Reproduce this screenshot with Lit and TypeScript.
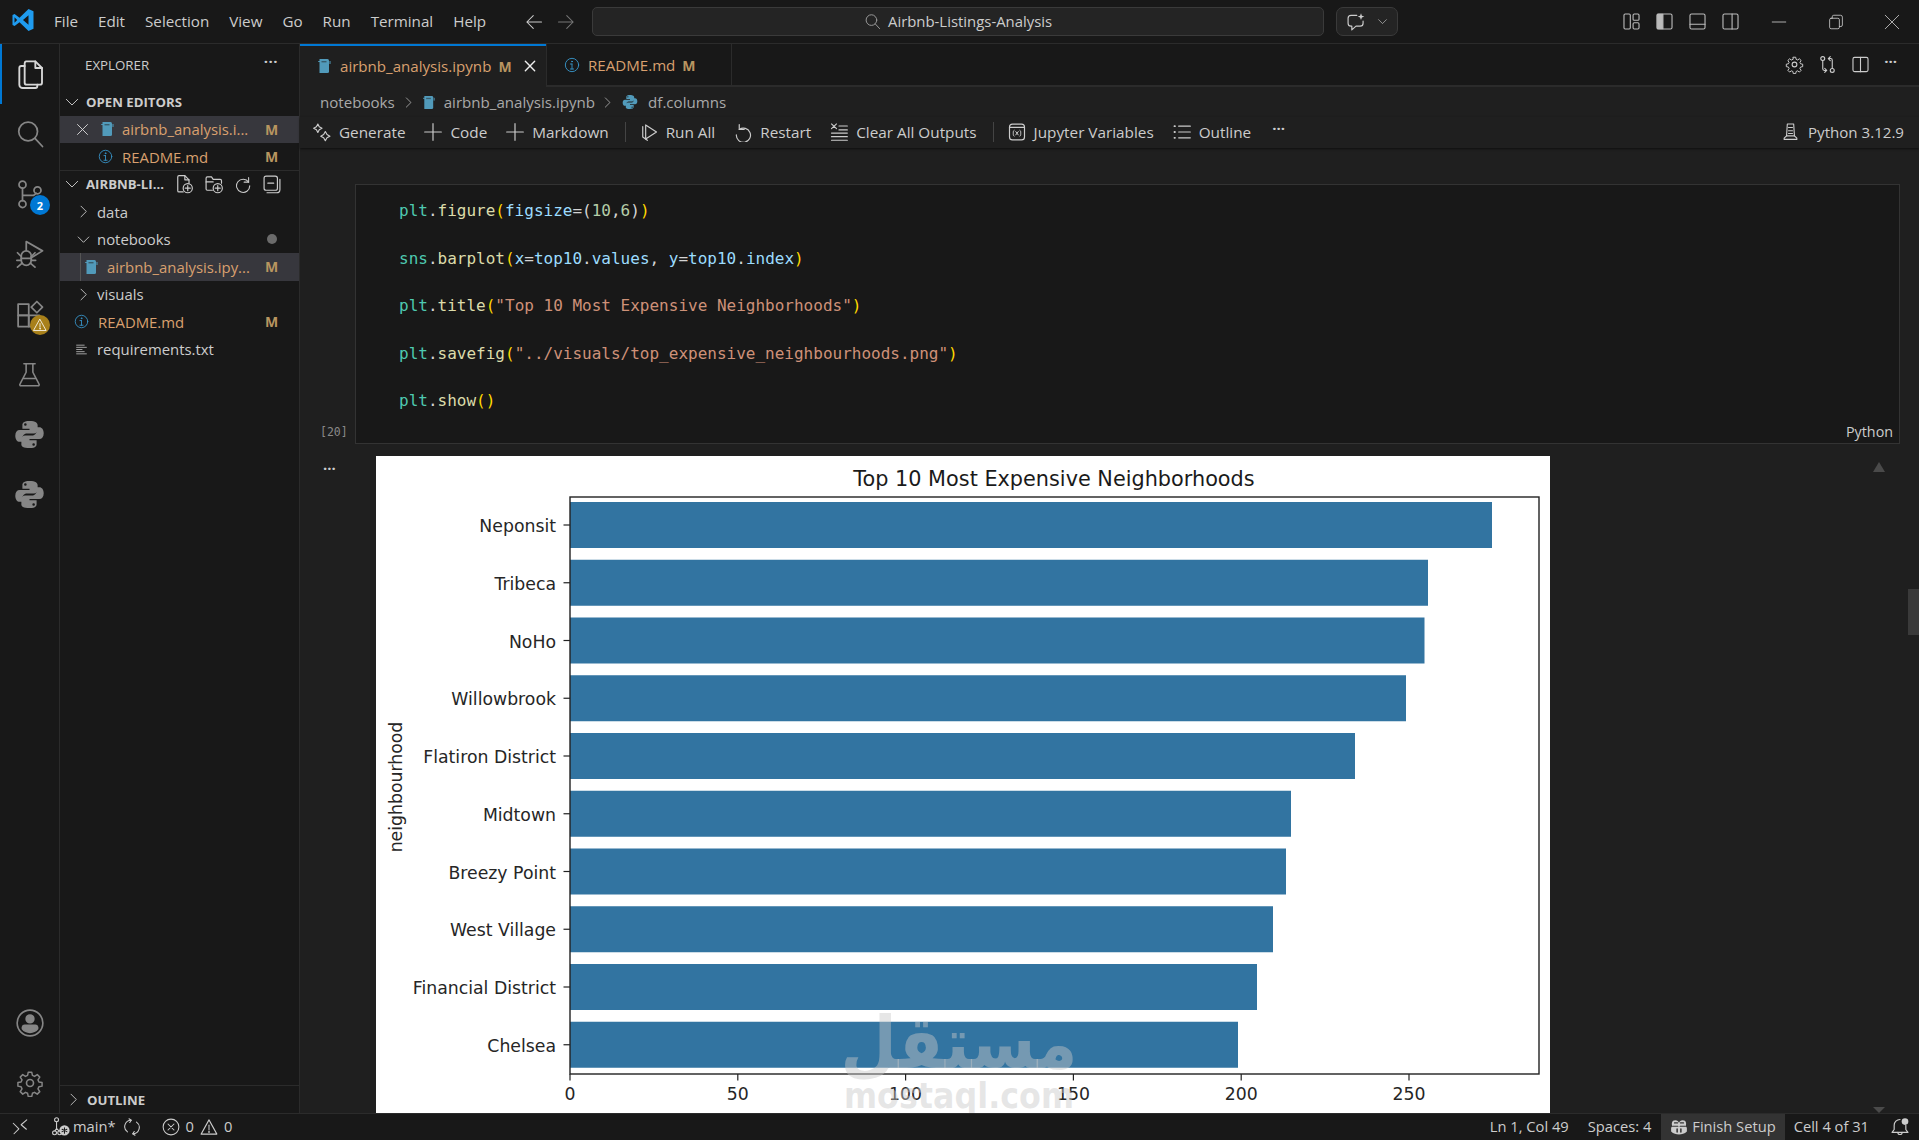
import { LitElement, html, css, svg } from "lit";
import { customElement } from "lit/decorators.js";

const ic = (size: number, body: unknown, vb = "0 0 24 24") => html`<svg class="ic" width=${size} height=${size} viewBox=${vb} fill="none" stroke="currentColor" stroke-width="1.4" stroke-linecap="round" stroke-linejoin="round">${body}</svg>`;

const I = {
  files: svg`<path d="M9 2.500h7l5 5v11a1.500 1.500 0 0 1-1.500 1.500h-10A1.500 1.500 0 0 1 8 18.500v-14.500a1.500 1.500 0 0 1 1-1.500z"/><path d="M16 2.500v5h5"/><path d="M8 6H5.500A1.500 1.500 0 0 0 4 7.500V20a2.500 2.500 0 0 0 2.500 2.500H16a1.500 1.500 0 0 0 1.500-1.500v-1"/>`,
  search: svg`<circle cx="10.500" cy="10" r="7.500"/><path d="M16 15.500l6 6.500"/>`,
  scm: svg`<circle cx="6" cy="4.500" r="2.800"/><circle cx="6" cy="20" r="2.800"/><circle cx="18" cy="9" r="2.800"/><path d="M6 7.300v9.900M6 13h9l2-1.500"/>`,
  debug: svg`<path d="M9 9V2l13 7.500-9 5.500"/><path d="M5 13.500a4 4 0 0 1 8 0V17a4 4 0 0 1-8 0z"/><path d="M2 11l3 3M16 11l-3 3M1.500 17H5M16.500 17H13M2 22.500l3.500-3M16 22.500l-3.500-3M5 15.500h8"/>`,
  ext: svg`<rect x="2.500" y="4" width="8.500" height="9"/><rect x="2.500" y="13" width="8.500" height="9"/><rect x="11" y="13" width="8.500" height="9"/><path d="M13 6.500l4.500-4.500 4.500 4.500-4.500 4.500z"/>`,
  beaker: svg`<path d="M7 2.500h10M9 2.500v7.500L3.500 20.500a1 1 0 0 0 1 1.500h15a1 1 0 0 0 1-1.500L15 10V2.500M7 15.500h10"/>`,
  account: svg`<circle cx="12" cy="12" r="11"/><circle cx="12" cy="8.500" r="3.300" fill="currentColor"/><path d="M5.500 15.500a2 2 0 0 1 2-1.500h9a2 2 0 0 1 2 1.500v1.500c-1.500 2-4 3-6.500 3s-5-1-6.500-3z" fill="currentColor"/>`,
  gear: svg`<circle cx="12" cy="12" r="3"/><path d="M10.300 1.800h3.400l.6 3 2 .9 2.600-1.700 2.400 2.400-1.700 2.600.9 2 3 .6v3.400l-3 .6-.9 2 1.700 2.600-2.400 2.400-2.600-1.700-2 .9-.6 3h-3.400l-.6-3-2-.9-2.600 1.700-2.400-2.400 1.700-2.600-.9-2-3-.6v-3.400l3-.6.9-2-1.700-2.600 2.400-2.400 2.600 1.700 2-.9z" transform="translate(1.200 1.200) scale(.9)"/>`,
  chevR: svg`<path d="M8 3.500l8.500 8.500L8 20.500"/>`,
  chevD: svg`<path d="M3.500 8l8.500 8.500L20.500 8"/>`,
  x: svg`<path d="M4 4l16 16M20 4L4 20"/>`,
  plus: svg`<path d="M12 2v20M2 12h20"/>`,
  info: svg`<circle cx="12" cy="12" r="10"/><path d="M12 10.500V18M9.500 18h5M9.500 10.500H12" /><circle cx="12" cy="6.800" r=".7" fill="currentColor"/>`,
  lines: svg`<path d="M3 5h14M3 9h18M3 13h10M3 17h14M3 21h18" transform="translate(0 -1)"/>`,
  sparkle: svg`<path d="M7 2.500l1.700 3.300L12 7.500 8.700 9.200 7 12.500 5.300 9.200 2 7.500l3.300-1.700zM16 11.500l2 3.500 3.500 2-3.500 2-2 3.500-2-3.500-3.500-2 3.500-2z"/>`,
  run: svg`<path d="M8 3.500L21 12 8 20.500z"/><path d="M4.500 5.500v12.500l5.500 4" />`,
  restart: svg`<path d="M7.500 3v6h6"/><path d="M7.500 9A8.500 8.500 0 1 1 4 15.500"/>`,
  clear: svg`<path d="M3 2.500l6 6M9 2.500l-6 6M12 5h10M12 10h10M3 14h19M3 18.500h19M3 23h19" transform="scale(1 .95)"/>`,
  vars: svg`<rect x="3" y="2.500" width="18" height="19" rx="3.500"/><path d="M3 6.500h18"/><path d="M8.500 10c-1 .5-1 1.500-1 3.500s0 3 1 3.500M15.500 10c1 .5 1 1.500 1 3.500s0 3-1 3.500M10.500 11.500l3 4M13.500 11.500l-3 4" stroke-width="1.200"/>`,
  outline: svg`<path d="M3 5h.5M3 12h.5M3 19h.5" stroke-width="2.200"/><path d="M8 5h14M8 12h14M8 19h14"/>`,
  kernel: svg`<path d="M8 2.500h8l1 15H7zM9.500 7h5M9.500 11h5M9.500 14.500h5"/><path d="M7 17.500l-3 3v1.500h16v-1.500l-3-3"/>`,
  compare: svg`<circle cx="6" cy="4.500" r="2.500"/><circle cx="18" cy="19.500" r="2.500"/><path d="M6 7v10.500a2 2 0 0 0 2 2h3l-2.500-2.500M11 19.500L8.500 22"/><path d="M18 17V6.500a2 2 0 0 0-2-2h-3l2.500 2.500M13 4.500L15.500 2"/>`,
  split: svg`<rect x="2.500" y="3" width="19" height="18" rx="2"/><path d="M12 3v18"/>`,
  layout: svg`<rect x="2.500" y="2.500" width="8" height="19" rx="1.500"/><rect x="14" y="2.500" width="7.500" height="8" rx="1.500"/><rect x="14" y="13.500" width="7.500" height="8" rx="1.500"/>`,
  side: svg`<rect x="2.500" y="2.500" width="19" height="19" rx="2"/><path d="M3 3h7v18H3z" fill="currentColor"/>`,
  panel: svg`<rect x="2.500" y="2.500" width="19" height="19" rx="2"/><path d="M2.500 15.500h19"/>`,
  right: svg`<rect x="2.500" y="2.500" width="19" height="19" rx="2"/><path d="M14 2.500v19"/>`,
  chat: svg`<path d="M13 4H6a3.500 3.500 0 0 0-3.500 3.500v6A3.500 3.500 0 0 0 6 17h1v4.500l5-4.500h5a3.500 3.500 0 0 0 3.500-3.500V11"/><path d="M18 1.500l1.100 2.900L22 5.500l-2.900 1.100L18 9.500l-1.100-2.900L14 5.500l2.900-1.100z" fill="currentColor" stroke="none"/>`,
  newfile: svg`<path d="M11 21.500H6a1.500 1.500 0 0 1-1.500-1.500V3.500A1.500 1.500 0 0 1 6 2h7l5 5v4"/><path d="M13 2v5h5"/><circle cx="16.500" cy="17" r="5.500"/><path d="M16.500 14v6M13.500 17h6"/>`,
  newfolder: svg`<path d="M10 19.500H4a1.500 1.500 0 0 1-1.500-1.500V5A1.500 1.500 0 0 1 4 3.500h5l2 3h8.500A1.500 1.500 0 0 1 21 8v3"/><path d="M2.500 9.500H11"/><circle cx="16.500" cy="17" r="5.500"/><path d="M16.500 14v6M13.500 17h6"/>`,
  refresh: svg`<path d="M19.500 3.500v6h-6"/><path d="M19.500 9.500A8.800 8.800 0 1 0 21 14.500"/>`,
  collapse: svg`<rect x="2.500" y="2.500" width="16" height="17" rx="2.500"/><path d="M7 11h7"/><path d="M6 22.500h11.500a4 4 0 0 0 4-4V6.500"/>`,
  sync: svg`<path d="M6 18.500a8.500 8.500 0 0 1 5-15.500M18 5.500a8.500 8.500 0 0 1-5 15.500"/><path d="M8 1l3 2-2 3M16 23l-3-2 2-3"/>`,
  err: svg`<circle cx="12" cy="12" r="10.500"/><path d="M8 8l8 8M16 8l-8 8"/>`,
  warn: svg`<path d="M12 2.500L22.500 21.500h-21z"/><path d="M12 9.500v6.500"/><circle cx="12" cy="18.500" r=".5" fill="currentColor"/>`,
  remote: svg`<path d="M3 7l7.500 7.500L4 21M21 2.500L13.500 9l7 6"/>`,
  branch: svg`<circle cx="7" cy="3.500" r="2.500"/><circle cx="4.500" cy="20" r="2.500"/><circle cx="11" cy="20" r="2.500"/><path d="M7 6v8.500M7 14.500L5 17.500M7 14.500l3 3"/><circle cx="17" cy="17" r="6.500" fill="currentColor" stroke="none"/><path d="M17 13.500v7M14 15.500l6 3M20 15.500l-6 3" stroke="#181818" stroke-width="1.300"/>`,
  copilot: svg`<path d="M3 11c-1-3-1-8 4-8 3 0 4 1.500 5 3.500C13 4.500 14 3 17 3c5 0 5 5 4 8l1.500 2v5c-3 3-7 4-10.500 4S4.500 21 1.500 18v-5z" fill="currentColor" stroke="none"/><path d="M6 6.500h4M14 6.500h4M3.500 11h7M13.500 11h7" stroke="#333" stroke-width="1.600"/><path d="M9.500 14.500v4M14.500 14.500v4" stroke="#333" stroke-width="2"/>`,
  bell: svg`<path d="M12 3a7 7 0 0 0-7 7v5l-2.500 3.500h19L19 15v-5"/><path d="M9.500 18.500a2.500 2.500 0 0 0 5 0"/><circle cx="18" cy="5.500" r="4" fill="currentColor" stroke="none"/>`,
  min: svg`<path d="M3 12h18" stroke-width="1.100"/>`,
  restore: svg`<rect x="3.500" y="7" width="13" height="14" rx="2" stroke-width="1.100"/><path d="M7 7V5a2 2 0 0 1 2-2h9a2.500 2.500 0 0 1 2.500 2.500V16a2 2 0 0 1-2 2h-2" stroke-width="1.100"/>`,
  closeWin: svg`<path d="M3 3l18 18M21 3L3 21" stroke-width="1.100"/>`,
  back: svg`<path d="M22 12H2.500M11 3.500L2.500 12l8.500 8.500"/>`,
  fwd: svg`<path d="M2 12h19.500M13 3.500l8.500 8.500-8.500 8.500"/>`,
};

const pyFill = svg`<path d="M11.800 1.500c-5 0-5.300 2.100-5.300 3.200v2.800h5.500v1H4.400C2.400 8.500 1 10 1 13s1.500 4.700 3.300 4.700h2.200v-3c0-2 1.700-3.500 3.600-3.500h5.300c1.600 0 2.900-1.300 2.900-2.900V4.700c0-1.500-1.300-3.200-6.500-3.200zM8.800 3.300a1 1 0 1 1 0 2 1 1 0 0 1 0-2z" fill="currentColor" stroke="none" fill-rule="evenodd"/><path d="M12.200 22.500c5 0 5.300-2.100 5.300-3.200v-2.800H12v-1h7.600c2 0 3.400-1.500 3.400-4.500s-1.500-4.700-3.300-4.700h-2.200v3c0 2-1.700 3.500-3.600 3.500H8.600c-1.600 0-2.900 1.300-2.900 2.900v4.100c0 1.500 1.300 2.700 6.500 2.700zm3-1.800a1 1 0 1 1 0-2 1 1 0 0 1 0 2z" fill="currentColor" stroke="none" fill-rule="evenodd"/>`;

const nb = (size = 16) => html`<svg class="ic nb" width=${size} height=${size} viewBox="0 0 16 16"><path d="M3.500 1h8A1.500 1.500 0 0 1 13 2.500v11a1.500 1.500 0 0 1-1.500 1.500h-8z" fill="#519aba"/><rect x="2.200" y="3" width="2" height="1" fill="#519aba"/><rect x="5.500" y="3" width="5" height="1.400" fill="#1f1f1f" opacity=".5"/><path d="M14 3v3" stroke="#519aba" stroke-width="1"/></svg>`;

const bars: [string, number][] = [
  ["Neponsit", 1492], ["Tribeca", 1428], ["NoHo", 1424.5], ["Willowbrook", 1406], ["Flatiron District", 1355],
  ["Midtown", 1291], ["Breezy Point", 1286], ["West Village", 1273], ["Financial District", 1257], ["Chelsea", 1238],
];

const chart = svg`
  <text class="ct" x="1054" y="486" text-anchor="middle">Top 10 Most Expensive Neighborhoods</text>
  ${bars.map(([n, end], i) => {
    const y = 502 + i * 57.75;
    return svg`<rect x="570" y=${y} width=${end - 570} height="46" fill="#3274a1"/>
      <path d="M563.500 ${y + 23}H570" stroke="#222" stroke-width="1.200"/>
      <text class="cl" x="556" y=${y + 30} text-anchor="end">${n}</text>`;
  })}
  <rect x="570" y="497" width="969" height="577" fill="none" stroke="#222" stroke-width="1.400"/>
  ${[0, 50, 100, 150, 200, 250].map((v) => {
    const x = 570 + v * 3.356;
    return svg`<path d="M${x} 1074v6.500" stroke="#222" stroke-width="1.200"/><text class="cl" x=${x} y="1100" text-anchor="middle">${v}</text>`;
  })}
  <text class="cl" transform="translate(402 787) rotate(-90)" text-anchor="middle">neighbourhood</text>
  <text class="wm ar" transform="translate(959 1068) scale(.9 1)" text-anchor="middle">مستقل</text>
  <text class="wm en" x="959" y="1108" text-anchor="middle" textLength="230" lengthAdjust="spacingAndGlyphs">mostaql.com</text>
`;

const code = [
  html`<span class="t">plt</span>.<span class="f">figure</span><span class="p">(</span><span class="v">figsize</span>=<span class="q">(</span><span class="n">10</span>,<span class="n">6</span><span class="q">)</span><span class="p">)</span>`,
  html`<span class="t">sns</span>.<span class="f">barplot</span><span class="p">(</span><span class="v">x</span>=<span class="v">top10</span>.<span class="v">values</span>, <span class="v">y</span>=<span class="v">top10</span>.<span class="v">index</span><span class="p">)</span>`,
  html`<span class="t">plt</span>.<span class="f">title</span><span class="p">(</span><span class="s">"Top 10 Most Expensive Neighborhoods"</span><span class="p">)</span>`,
  html`<span class="t">plt</span>.<span class="f">savefig</span><span class="p">(</span><span class="s">"../visuals/top_expensive_neighbourhoods.png"</span><span class="p">)</span>`,
  html`<span class="t">plt</span>.<span class="f">show</span><span class="p">(</span><span class="p">)</span>`,
];

@customElement("app-root")
export class AppRoot extends LitElement {
  static styles = css`
    :host { display: block; width: 1919px; height: 1140px; overflow: hidden; background: #181818; color: #ccc; font-family: "Open Sans", "Noto Sans", sans-serif; font-size: 14.900px; }
    * { box-sizing: border-box; }
    .ic { display: block; flex: none; }
    .app { display: flex; flex-direction: column; height: 1140px; }

    .title { height: 44px; flex: none; display: flex; align-items: center; border-bottom: 1px solid #2b2b2b; background: #181818; position: relative; }
    .logo { margin-left: 11px; width: 24px; flex: none; }
    .menu { display: flex; gap: 20px; margin-left: 19px; font-size: 15.200px; padding-bottom: 1px; }
    .arrows { display: flex; gap: 14px; margin-left: 39px; color: #ccc; }
    .arrows .off { color: #777; }
    .cmd { margin-left: 17px; width: 732px; height: 29px; border: 1px solid #3a3a3a; border-radius: 5px; background: #242424; display: flex; align-items: center; justify-content: center; gap: 7px; color: #ccc; padding-bottom: 1px; }
    .cmd .ic { color: #999; }
    .chatbtn { margin-left: 12px; width: 62px; height: 29px; border: 1px solid #3a3a3a; border-radius: 7px; background: #242424; display: flex; align-items: center; gap: 11px; padding-left: 9px; }
    .spacer { flex: 1; }
    .layouts { display: flex; gap: 14px; margin-right: 30px; color: #bbb; }
    .win { display: flex; gap: 38.500px; margin-right: 18px; }

    .main { flex: 1; display: flex; min-height: 0; }
    .activity { width: 60px; flex: none; border-right: 1px solid #2b2b2b; display: flex; flex-direction: column; color: #868686; }
    .act { height: 60px; flex: none; display: flex; align-items: center; justify-content: center; position: relative; }
    .act.on { color: #d7d7d7; box-shadow: inset 2px 0 0 #0078d4; }
    .badge { position: absolute; left: 30px; top: 31px; width: 20px; height: 20px; border-radius: 50%; background: #0078d4; color: #fff; font-size: 11px; font-weight: 700; display: flex; align-items: center; justify-content: center; }
    .badge.w { background: #a8801a; }

    .side { width: 240px; flex: none; border-right: 1px solid #2b2b2b; display: flex; flex-direction: column; }
    .shead { height: 44px; flex: none; padding: 0 21px 3px 25px; display: flex; align-items: center; font-size: 13.300px; justify-content: space-between; }
    .shead span:last-child { font-weight: 700; letter-spacing: .5px; font-size: 15px; line-height: 1; margin-top: -7px; }
    .row { height: 27.500px; flex: none; display: flex; align-items: center; position: relative; white-space: nowrap; }
    .row.sel { background: #37373d; }
    .row .m { position: absolute; left: 205px; color: #b89560; font-weight: 700; font-size: 14px; }
    .hdr { font-weight: 700; font-size: 13.200px; padding-left: 4px; gap: 6px; }
    .mod { color: #d9a06f; }
    .sep { border-top: 1px solid #2b2b2b; height: 1px; flex: none; margin-top: -1px; }
    .blue { color: #3794c8; }
    .dot { position: absolute; left: 207px; width: 10px; height: 10px; border-radius: 50%; background: #6b6b6b; }
    .guide { position: absolute; left: 20px; top: 0; bottom: 0; border-left: 1px solid #555; }
    .tools { display: flex; gap: 10px; margin-left: 4px; align-items: center; }
    .grow { flex: 1; }
    .outline { height: 28px; flex: none; border-top: 1px solid #2b2b2b; display: flex; align-items: center; gap: 6px; padding-left: 6px; font-weight: 700; font-size: 13.200px; }
    .rowx { color: #e0e0e0; }

    .editor { flex: 1; min-width: 0; display: flex; flex-direction: column; background: #1f1f1f; }
    .tabs { height: 43px; flex: none; display: flex; background: #181818; border-bottom: 2px solid #2b2b2b; align-items: stretch; }
    .tab { display: flex; align-items: center; border-right: 1px solid #2b2b2b; white-space: nowrap; position: relative; padding-top: 1px; font-size: 15.100px; }
    .tab.a { width: 247px; padding-left: 16px; background: #1f1f1f; box-shadow: inset 0 2px 0 #0078d4; margin-bottom: -2px; }
    .tab.b { width: 185px; padding-left: 17px; }
    .tab .name { margin-left: 8px; }
    .tab .m { margin-left: 7px; color: #b89560; font-weight: 700; font-size: 14px; }
    .tab .ic.close { margin-left: 11px; color: #eee; }
    .tabactions { margin-left: auto; display: flex; gap: 14px; margin-right: 22px; align-items: center; }

    .crumbs { height: 30px; flex: none; display: flex; align-items: center; padding-left: 20px; color: #a9a9a9; white-space: nowrap; font-size: 15.100px; }
    .crumbs .chev { color: #bbb; }
    .toolbar { height: 31px; flex: none; display: flex; align-items: center; padding: 0 15px 2px 12px; gap: 18px; white-space: nowrap; box-shadow: 0 1px 2px #0f0f0f; position: relative; z-index: 1; font-size: 15.300px; }
    .tbi { display: flex; align-items: center; gap: 7px; }
    .tsep { width: 1px; height: 20px; background: #444; margin: 0 -5px 0 -2px; }
    .kernel { margin-left: auto; gap: 8px; font-size: 15.100px; }

    .nbk { flex: 1; min-height: 0; overflow: hidden; position: relative; padding-top: 36px; }
    .cellrow { display: flex; height: 260px; }
    .gutter { width: 55px; flex: none; display: flex; align-items: flex-end; padding: 0 0 5px 20px; font-family: "DejaVu Sans Mono", monospace; font-size: 11.500px; color: #8a8a8a; }
    .cell { width: 1545px; flex: none; background: #181818; border: 1px solid #333; padding: 2px 0 0 43px; position: relative; font-family: "DejaVu Sans Mono", monospace; font-size: 16px; color: #d4d4d4; }
    .ln { height: 47.500px; line-height: 47.500px; white-space: pre; }
    .lang { position: absolute; right: 6px; bottom: 2px; font-family: "Open Sans", sans-serif; font-size: 14.300px; color: #ccc; }
    .t { color: #4ec9b0; } .f { color: #dcdcaa; } .p { color: #ffd700; } .q { color: #d4d4d4; } .v { color: #9cdcfe; } .n { color: #b5cea8; } .s { color: #ce9178; }
    .output { display: flex; margin-top: 12px; height: 700px; }
    .ogut { width: 76px; flex: none; padding: 5px 0 0 23px; font-weight: 700; line-height: 1; }
    .chart { width: 1174px; height: 660px; flex: none; background: #fff; display: block; }
    .ct { font: 20.800px "DejaVu Sans", sans-serif; fill: #1a1a1a; }
    .cl { font: 17.300px "DejaVu Sans", sans-serif; fill: #262626; }
    .wm { font-family: "DejaVu Sans", sans-serif; font-weight: 700; fill: rgba(200,200,200,.45); }
    .wm.ar { font-size: 72px; }
    .wm.en { font-size: 36px; }
    .tri { position: absolute; left: 1573px; width: 0; height: 0; border-left: 6px solid transparent; border-right: 6px solid transparent; }
    .tri.up { top: 314px; border-bottom: 10px solid #4a4a4a; }
    .tri.dn { bottom: 0; border-top: 6px solid #4a4a4a; }
    .thumb { position: absolute; left: 1608px; top: 441px; width: 11px; height: 46px; background: #3a3a3a; }

    .status { height: 27px; flex: none; border-top: 1px solid #2b2b2b; background: #181818; display: flex; align-items: center; white-space: nowrap; font-size: 14.700px; line-height: 1; padding-bottom: 1px; }
    .sgroup { display: flex; align-items: center; height: 100%; }
    .setup { background: #333; height: 27px; margin-bottom: -1px; display: flex; align-items: center; padding: 0 9px 1px 9px; gap: 4px; }
  `;

  render() {
    return html`<div class="app">
      <div class="title">
        <div class="logo"><svg width="24" height="24" viewBox="0 0 24 24"><path d="M17.500 1L22.500 3.300V20.700L17.500 23 8.500 14.200 3.600 18 1.500 17V7L3.600 6 8.500 9.800zM17.500 7.300L12 12l5.500 4.700zM3.500 9.300v5.400L6.200 12z" fill="#1f9cf0" fill-rule="evenodd"/></svg></div>
        <div class="menu"><span>File</span><span>Edit</span><span>Selection</span><span>View</span><span>Go</span><span>Run</span><span>Terminal</span><span>Help</span></div>
        <div class="arrows">${ic(18, I.back)}<span class="off">${ic(18, I.fwd)}</span></div>
        <div class="cmd">${ic(17, I.search)}<span>Airbnb-Listings-Analysis</span></div>
        <div class="chatbtn">${ic(20, I.chat)}${ic(11, I.chevD)}</div>
        <div class="spacer"></div>
        <div class="layouts">${ic(19, I.layout)}${ic(19, I.side)}${ic(19, I.panel)}${ic(19, I.right)}</div>
        <div class="win">${ic(18, I.min)}${ic(18, I.restore)}${ic(18, I.closeWin)}</div>
      </div>

      <div class="main">
        <div class="activity">
          <div class="act on">${ic(32, I.files)}</div>
          <div class="act">${ic(30, I.search)}</div>
          <div class="act">${ic(30, I.scm)}<span class="badge">2</span></div>
          <div class="act">${ic(30, I.debug)}</div>
          <div class="act">${ic(30, I.ext)}<span class="badge w">${ic(14, I.warn)}</span></div>
          <div class="act">${ic(27, I.beaker)}</div>
          <div class="act">${ic(31, pyFill)}</div>
          <div class="act">${ic(31, pyFill)}</div>
          <div class="grow"></div>
          <div class="act">${ic(28, I.account)}</div>
          <div class="act">${ic(28, I.gear)}</div>
        </div>

        <div class="side">
          <div class="shead"><span>EXPLORER</span><span>···</span></div>
          <div class="row hdr">${ic(16, I.chevD)}<span>OPEN EDITORS</span></div>
          <div class="row sel" style="padding-left:15px"><span class="rowx">${ic(15, I.x)}</span><span style="margin-left:9px">${nb()}</span><span class="mod" style="margin-left:7px">airbnb_analysis.i...</span><span class="m">M</span></div>
          <div class="row" style="padding-left:38px"><span class="blue">${ic(15, I.info)}</span><span class="mod" style="margin-left:9px">README.md</span><span class="m">M</span></div>
          <div class="sep"></div>
          <div class="row hdr">${ic(16, I.chevD)}<span>AIRBNB-LI...</span><span class="tools">${ic(20, I.newfile)}${ic(20, I.newfolder)}${ic(18, I.refresh)}${ic(20, I.collapse)}</span></div>
          <div class="row" style="padding-left:16px">${ic(15, I.chevR)}<span style="margin-left:6px">data</span></div>
          <div class="row" style="padding-left:16px">${ic(15, I.chevD)}<span style="margin-left:6px">notebooks</span><span class="dot"></span></div>
          <div class="row sel" style="padding-left:23px"><span class="guide"></span>${nb()}<span class="mod" style="margin-left:8px">airbnb_analysis.ipy...</span><span class="m">M</span></div>
          <div class="row" style="padding-left:16px">${ic(15, I.chevR)}<span style="margin-left:6px">visuals</span></div>
          <div class="row" style="padding-left:14px"><span class="blue">${ic(15, I.info)}</span><span class="mod" style="margin-left:9px">README.md</span><span class="m">M</span></div>
          <div class="row" style="padding-left:15px">${ic(13, I.lines)}<span style="margin-left:9px">requirements.txt</span></div>
          <div class="grow"></div>
          <div class="outline">${ic(15, I.chevR)}<span>OUTLINE</span></div>
        </div>

        <div class="editor">
          <div class="tabs">
            <div class="tab a">${nb()}<span class="name mod">airbnb_analysis.ipynb</span><span class="m">M</span><svg class="ic close" width="14" height="14" viewBox="0 0 24 24" fill="none" stroke="currentColor" stroke-width="2.400" stroke-linecap="round">${I.x}</svg></div>
            <div class="tab b"><span class="blue">${ic(16, I.info)}</span><span class="name mod">README.md</span><span class="m">M</span></div>
            <div class="tabactions">${ic(19, I.gear)}${ic(19, I.compare)}${ic(19, I.split)}<span style="font-weight:700;line-height:1;margin-top:-6px;font-size:15px">···</span></div>
          </div>
          <div class="crumbs"><span>notebooks</span><span class="chev" style="margin:0 6px 0 7px">${ic(13, I.chevR)}</span>${nb(15)}<span style="margin-left:8px">airbnb_analysis.ipynb</span><span class="chev" style="margin:0 8px 0 6px">${ic(13, I.chevR)}</span><span style="color:#519aba">${ic(16, pyFill)}</span><span style="margin-left:10px">df.columns</span></div>
          <div class="toolbar">
            <div class="tbi">${ic(20, I.sparkle)}<span>Generate</span></div>
            <div class="tbi">${ic(20, I.plus)}<span>Code</span></div>
            <div class="tbi">${ic(20, I.plus)}<span>Markdown</span></div>
            <div class="tsep"></div>
            <div class="tbi">${ic(20, I.run)}<span>Run All</span></div>
            <div class="tbi">${ic(20, I.restart)}<span>Restart</span></div>
            <div class="tbi">${ic(20, I.clear)}<span>Clear All Outputs</span></div>
            <div class="tsep"></div>
            <div class="tbi">${ic(20, I.vars)}<span>Jupyter Variables</span></div>
            <div class="tbi">${ic(20, I.outline)}<span>Outline</span></div>
            <div class="tbi"><span style="font-weight:700;line-height:1;margin:-6px 0 0 3px;font-size:15px">···</span></div>
            <div class="tbi kernel">${ic(19, I.kernel)}<span>Python 3.12.9</span></div>
          </div>
          <div class="nbk">
            <div class="cellrow">
              <div class="gutter">[20]</div>
              <div class="cell">${code.map((l) => html`<div class="ln">${l}</div>`)}<span class="lang">Python</span></div>
            </div>
            <div class="output">
              <div class="ogut">···</div>
              <svg class="chart" viewBox="376 456 1174 660">${chart}</svg>
            </div>
            <div class="tri up"></div>
            <div class="tri dn"></div>
            <div class="thumb"></div>
          </div>
        </div>
      </div>

      <div class="status">
        <div class="sgroup" style="padding-left:11px">${ic(18, I.remote)}</div>
        <div class="sgroup" style="margin-left:22px;gap:3px">${ic(19, I.branch)}<span>main*</span></div>
        <div class="sgroup" style="margin-left:7px">${ic(18, I.sync)}</div>
        <div class="sgroup" style="margin-left:21px;gap:6px">${ic(18, I.err)}<span>0</span>${ic(18, I.warn)}<span>0</span></div>
        <div class="spacer"></div>
        <span>Ln 1, Col 49</span>
        <span style="margin-left:19px">Spaces: 4</span>
        <div class="setup" style="margin-left:10px">${ic(18, I.copilot)}<span>Finish Setup</span></div>
        <span style="margin-left:9px">Cell 4 of 31</span>
        <span style="margin:0 9px 0 21px">${ic(20, I.bell)}</span>
      </div>
    </div>`;
  }
}
